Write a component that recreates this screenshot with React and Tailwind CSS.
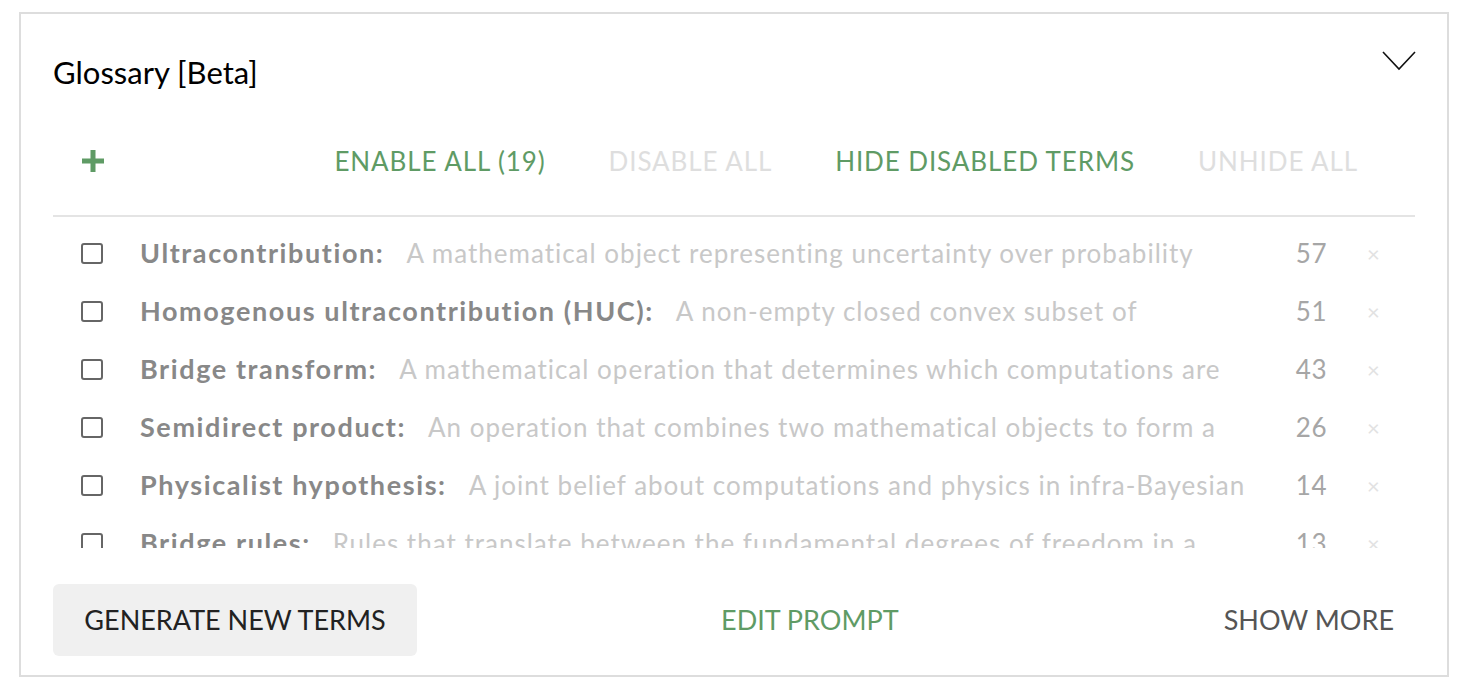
import React, { useState } from 'react';

const terms = [
  { id: 'ultra', term: 'Ultracontribution:', definition: 'A mathematical object representing uncertainty over probability distributions over outcomes', count: 57 },
  { id: 'huc', term: 'Homogenous ultracontribution (HUC):', definition: 'A non-empty closed convex subset of nonnegative measures', count: 51 },
  { id: 'bridge', term: 'Bridge transform:', definition: 'A mathematical operation that determines which computations are running in a physical universe', count: 43 },
  { id: 'semi', term: 'Semidirect product:', definition: 'An operation that combines two mathematical objects to form a new one', count: 26 },
  { id: 'phys', term: 'Physicalist hypothesis:', definition: 'A joint belief about computations and physics in infra-Bayesian physicalism', count: 14 },
  { id: 'rules', term: 'Bridge rules:', definition: 'Rules that translate between the fundamental degrees of freedom in a physical theory and observations', count: 13 }
];

const font = { fontFamily: 'Lato, "Open Sans", sans-serif' };

function App() {
  const [checked, setChecked] = useState({});

  const toggle = (id) => setChecked(prev => ({ ...prev, [id]: !prev[id] }));

  return (
    <div className="min-h-screen bg-white pt-[12px] pl-[19px]" style={font}>
      <div className="w-[1430px] h-[665px] border-2 border-[#dddddd] bg-white px-[32px] flex flex-col">
        {/* Header */}
        <div className="flex justify-between items-start pt-[29px] h-[105px]">
          <h1 className="text-[31px] leading-[58px] text-black font-normal">Glossary [Beta]</h1>
          <svg width="34" height="20" viewBox="0 0 34 20" className="mt-[8px] -mr-[1px]">
            <path d="M1 1 L17 18 L33 1" fill="none" stroke="#111" strokeWidth="1.6" />
          </svg>
        </div>

        {/* Actions */}
        <div className="flex items-center h-[98px] border-b-2 border-[#e4e4e4] pb-[12px]">
          <svg width="24" height="24" viewBox="0 0 24 24" className="ml-[28px]">
            <path d="M12 1 V23 M1 12 H23" stroke="#5f9b65" strokeWidth="5" />
          </svg>
          <div className="flex-1" />
          <div className="flex items-center gap-[63px] pr-[57px]">
            <button className="text-[26px] tracking-[0.9px] uppercase text-[#5f9b65]">Enable all (19)</button>
            <button className="text-[26px] tracking-[0.9px] uppercase text-[#dedede]">Disable all</button>
            <button className="text-[26px] tracking-[0.9px] uppercase text-[#5f9b65]">Hide disabled terms</button>
            <button className="text-[26px] tracking-[0.9px] uppercase text-[#dedede]">Unhide all</button>
          </div>
        </div>

        {/* Terms */}
        <div className="h-[331px] overflow-hidden pt-[7px]">
          {terms.map(item => (
            <div key={item.id} className="flex items-center h-[58px]">
              <button
                onClick={() => toggle(item.id)}
                className="ml-[28px] w-[22px] h-[21px] border-2 border-[#666666] rounded-[3px] shrink-0 flex items-center justify-center"
              >
                {checked[item.id] && <span className="w-[9px] h-[9px] bg-[#666666]" />}
              </button>
              <div className="ml-[37px] w-[1114px] h-[36px] overflow-hidden leading-[36px]">
                <span className="text-[27px] tracking-[1.6px] font-bold text-[#888888]">{item.term}</span>
                <span className="ml-[22px] text-[26px] tracking-[1px] text-[#c8c8c8]">{item.definition}</span>
              </div>
              <div className="w-[73px] text-right text-[26px] tracking-[0.5px] text-[#a6a6a6]">{item.count}</div>
              <div className="ml-[40px] text-[22px] text-[#e2e2e2]">×</div>
            </div>
          ))}
        </div>

        {/* Footer */}
        <div className="flex justify-between items-center mt-[36px]">
          <button className="h-[72px] w-[364px] rounded-[6px] bg-[#f0f0f0] text-[27px] text-[#222222] uppercase">
            Generate new terms
          </button>
          <button className="px-[21px] text-[27px] text-[#5f9b65] uppercase">Edit prompt</button>
          <button className="px-[21px] text-[27px] text-[#555555] uppercase">Show more</button>
        </div>
      </div>
    </div>
  );
}

export default App;
